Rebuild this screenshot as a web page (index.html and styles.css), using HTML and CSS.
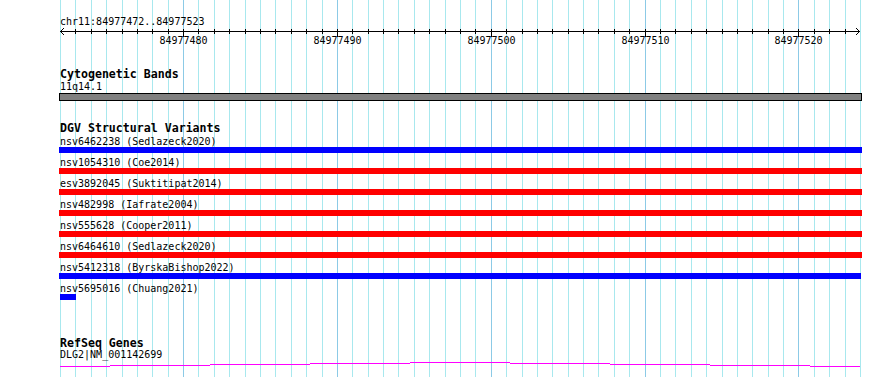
FILE: index.html
```html
<!DOCTYPE html>
<html lang="en">
<head>
    <meta charset="UTF-8">
    <title>chr11:84977472..84977523</title>
    <link rel="stylesheet" href="styles.css">
</head>
<body>
    <div class="panel">
        <!-- base-pair grid, one line per bp, darker every 10 bp -->
        <svg class="grid" width="890" height="377">
            <path class="grid-minor" d="M60.5 0V377M75.5 0V377M91.5 0V377M106.5 0V377M122.5 0V377M137.5 0V377M152.5 0V377M168.5 0V377M198.5 0V377M214.5 0V377M229.5 0V377M245.5 0V377M260.5 0V377M275.5 0V377M291.5 0V377M306.5 0V377M322.5 0V377M352.5 0V377M368.5 0V377M383.5 0V377M398.5 0V377M414.5 0V377M429.5 0V377M445.5 0V377M460.5 0V377M475.5 0V377M506.5 0V377M522.5 0V377M537.5 0V377M552.5 0V377M568.5 0V377M583.5 0V377M598.5 0V377M614.5 0V377M629.5 0V377M660.5 0V377M675.5 0V377M691.5 0V377M706.5 0V377M722.5 0V377M737.5 0V377M752.5 0V377M768.5 0V377M783.5 0V377M814.5 0V377M829.5 0V377M845.5 0V377M860.5 0V377"/>
            <path class="grid-major" d="M183.5 0V377M337.5 0V377M491.5 0V377M645.5 0V377M798.5 0V377"/>
        </svg>

        <div class="tracks">
            <section class="ruler">
                <div class="seg-name">chr11:84977472..84977523</div>
                <svg class="scale" width="890" height="20">
                    <path class="axis" d="M60 4.5H860M64 1L60.5 4.5L64 8M856 1L859.5 4.5L856 8"/>
                    <path class="axis" d="M75.5 2V7M91.5 2V7M106.5 2V7M122.5 2V7M137.5 2V7M152.5 2V7M168.5 2V7M198.5 2V7M214.5 2V7M229.5 2V7M245.5 2V7M260.5 2V7M275.5 2V7M291.5 2V7M306.5 2V7M322.5 2V7M352.5 2V7M368.5 2V7M383.5 2V7M398.5 2V7M414.5 2V7M429.5 2V7M445.5 2V7M460.5 2V7M475.5 2V7M506.5 2V7M522.5 2V7M537.5 2V7M552.5 2V7M568.5 2V7M583.5 2V7M598.5 2V7M614.5 2V7M629.5 2V7M660.5 2V7M675.5 2V7M691.5 2V7M706.5 2V7M722.5 2V7M737.5 2V7M752.5 2V7M768.5 2V7M783.5 2V7M814.5 2V7M829.5 2V7M845.5 2V7"/>
                    <path class="axis" d="M183.5 2V10M337.5 2V10M491.5 2V10M645.5 2V10M798.5 2V10"/>
                    <text class="tick-label" x="183.5" y="17">84977480</text>
                    <text class="tick-label" x="337.5" y="17">84977490</text>
                    <text class="tick-label" x="491.5" y="17">84977500</text>
                    <text class="tick-label" x="645.5" y="17">84977510</text>
                    <text class="tick-label" x="798.5" y="17">84977520</text>
                </svg>
            </section>

            <section class="track cyto">
                <h2 class="track-title">Cytogenetic Bands</h2>
                <div class="feat-label">11q14.1</div>
                <div class="band"></div>
            </section>

            <section class="track dgv">
                <h2 class="track-title">DGV Structural Variants</h2>
                <div class="features">
                    <div class="feature">
                        <div class="feat-label">nsv6462238 (Sedlazeck2020)</div>
                        <div class="bar gain" style="width:803px"></div>
                    </div>
                    <div class="feature">
                        <div class="feat-label">nsv1054310 (Coe2014)</div>
                        <div class="bar loss" style="width:803px"></div>
                    </div>
                    <div class="feature">
                        <div class="feat-label">esv3892045 (Suktitipat2014)</div>
                        <div class="bar loss" style="width:803px"></div>
                    </div>
                    <div class="feature">
                        <div class="feat-label">nsv482998 (Iafrate2004)</div>
                        <div class="bar loss" style="width:803px"></div>
                    </div>
                    <div class="feature">
                        <div class="feat-label">nsv555628 (Cooper2011)</div>
                        <div class="bar loss" style="width:803px"></div>
                    </div>
                    <div class="feature">
                        <div class="feat-label">nsv6464610 (Sedlazeck2020)</div>
                        <div class="bar loss" style="width:803px"></div>
                    </div>
                    <div class="feature">
                        <div class="feat-label">nsv5412318 (ByrskaBishop2022)</div>
                        <div class="bar gain" style="width:802px"></div>
                    </div>
                    <div class="feature">
                        <div class="feat-label">nsv5695016 (Chuang2021)</div>
                        <div class="bar gain" style="margin-left:0;width:16px"></div>
                    </div>
                </div>
            </section>

            <section class="track refseq">
                <h2 class="track-title">RefSeq Genes</h2>
                <div class="feat-label">DLG2|NM_001142699</div>
                <svg class="gene" width="890" height="17">
                    <path class="intron" d="M60 6.5H110M110 5.5H210M210 4.5H310M310 3.5H410M410 2.5H510M510 3.5H610M610 4.5H710M710 5.5H810M810 6.5H860"/>
                </svg>
            </section>
        </div>
    </div>
</body>
</html>
```

FILE: styles.css
```css
body {
    margin: 0;
    background: #fff;
    color: #000;
    font-family: "DejaVu Sans Mono", "Liberation Mono", monospace;
    font-size: 10px;
}

.panel {
    position: relative;
    width: 890px;
    height: 377px;
    overflow: hidden;
}

.grid {
    position: absolute;
    top: 0;
    left: 0;
}

.grid-minor {
    stroke: #a8e8ee;
    stroke-width: 1;
}

.grid-major {
    stroke: #8ccae6;
    stroke-width: 1;
}

.tracks {
    position: relative;
    display: flex;
    flex-direction: column;
    padding: 16px 0 0 60px;
}

.seg-name,
.feat-label {
    height: 11px;
    line-height: 11px;
    white-space: nowrap;
}

.scale,
.gene {
    display: block;
    margin-left: -60px;
}

.axis {
    fill: none;
    stroke: #000;
    stroke-width: 1;
}

.tick-label {
    font-family: "DejaVu Sans Mono", monospace;
    font-size: 10px;
    text-anchor: middle;
    fill: #000;
}

.track {
    margin-top: 21px;
}

.track-title {
    margin: 0;
    height: 12px;
    font-size: 11.6px;
    font-weight: bold;
    line-height: 12px;
    white-space: nowrap;
}

.cyto .feat-label {
    margin-top: 1px;
}

.band {
    margin: 1px 0 0 -1px;
    width: 801px;
    height: 6px;
    background: #808080;
    border: 1px solid #000;
}

.features {
    display: flex;
    flex-direction: column;
    gap: 4px;
    margin-top: 2px;
}

.bar {
    height: 6px;
    margin-left: -1px;
}

.bar.gain {
    background: #0000ff;
}

.bar.loss {
    background: #ff0000;
}

.refseq {
    margin-top: 37px;
}

.intron {
    fill: none;
    stroke: #ff00ff;
    stroke-width: 1;
}
```
